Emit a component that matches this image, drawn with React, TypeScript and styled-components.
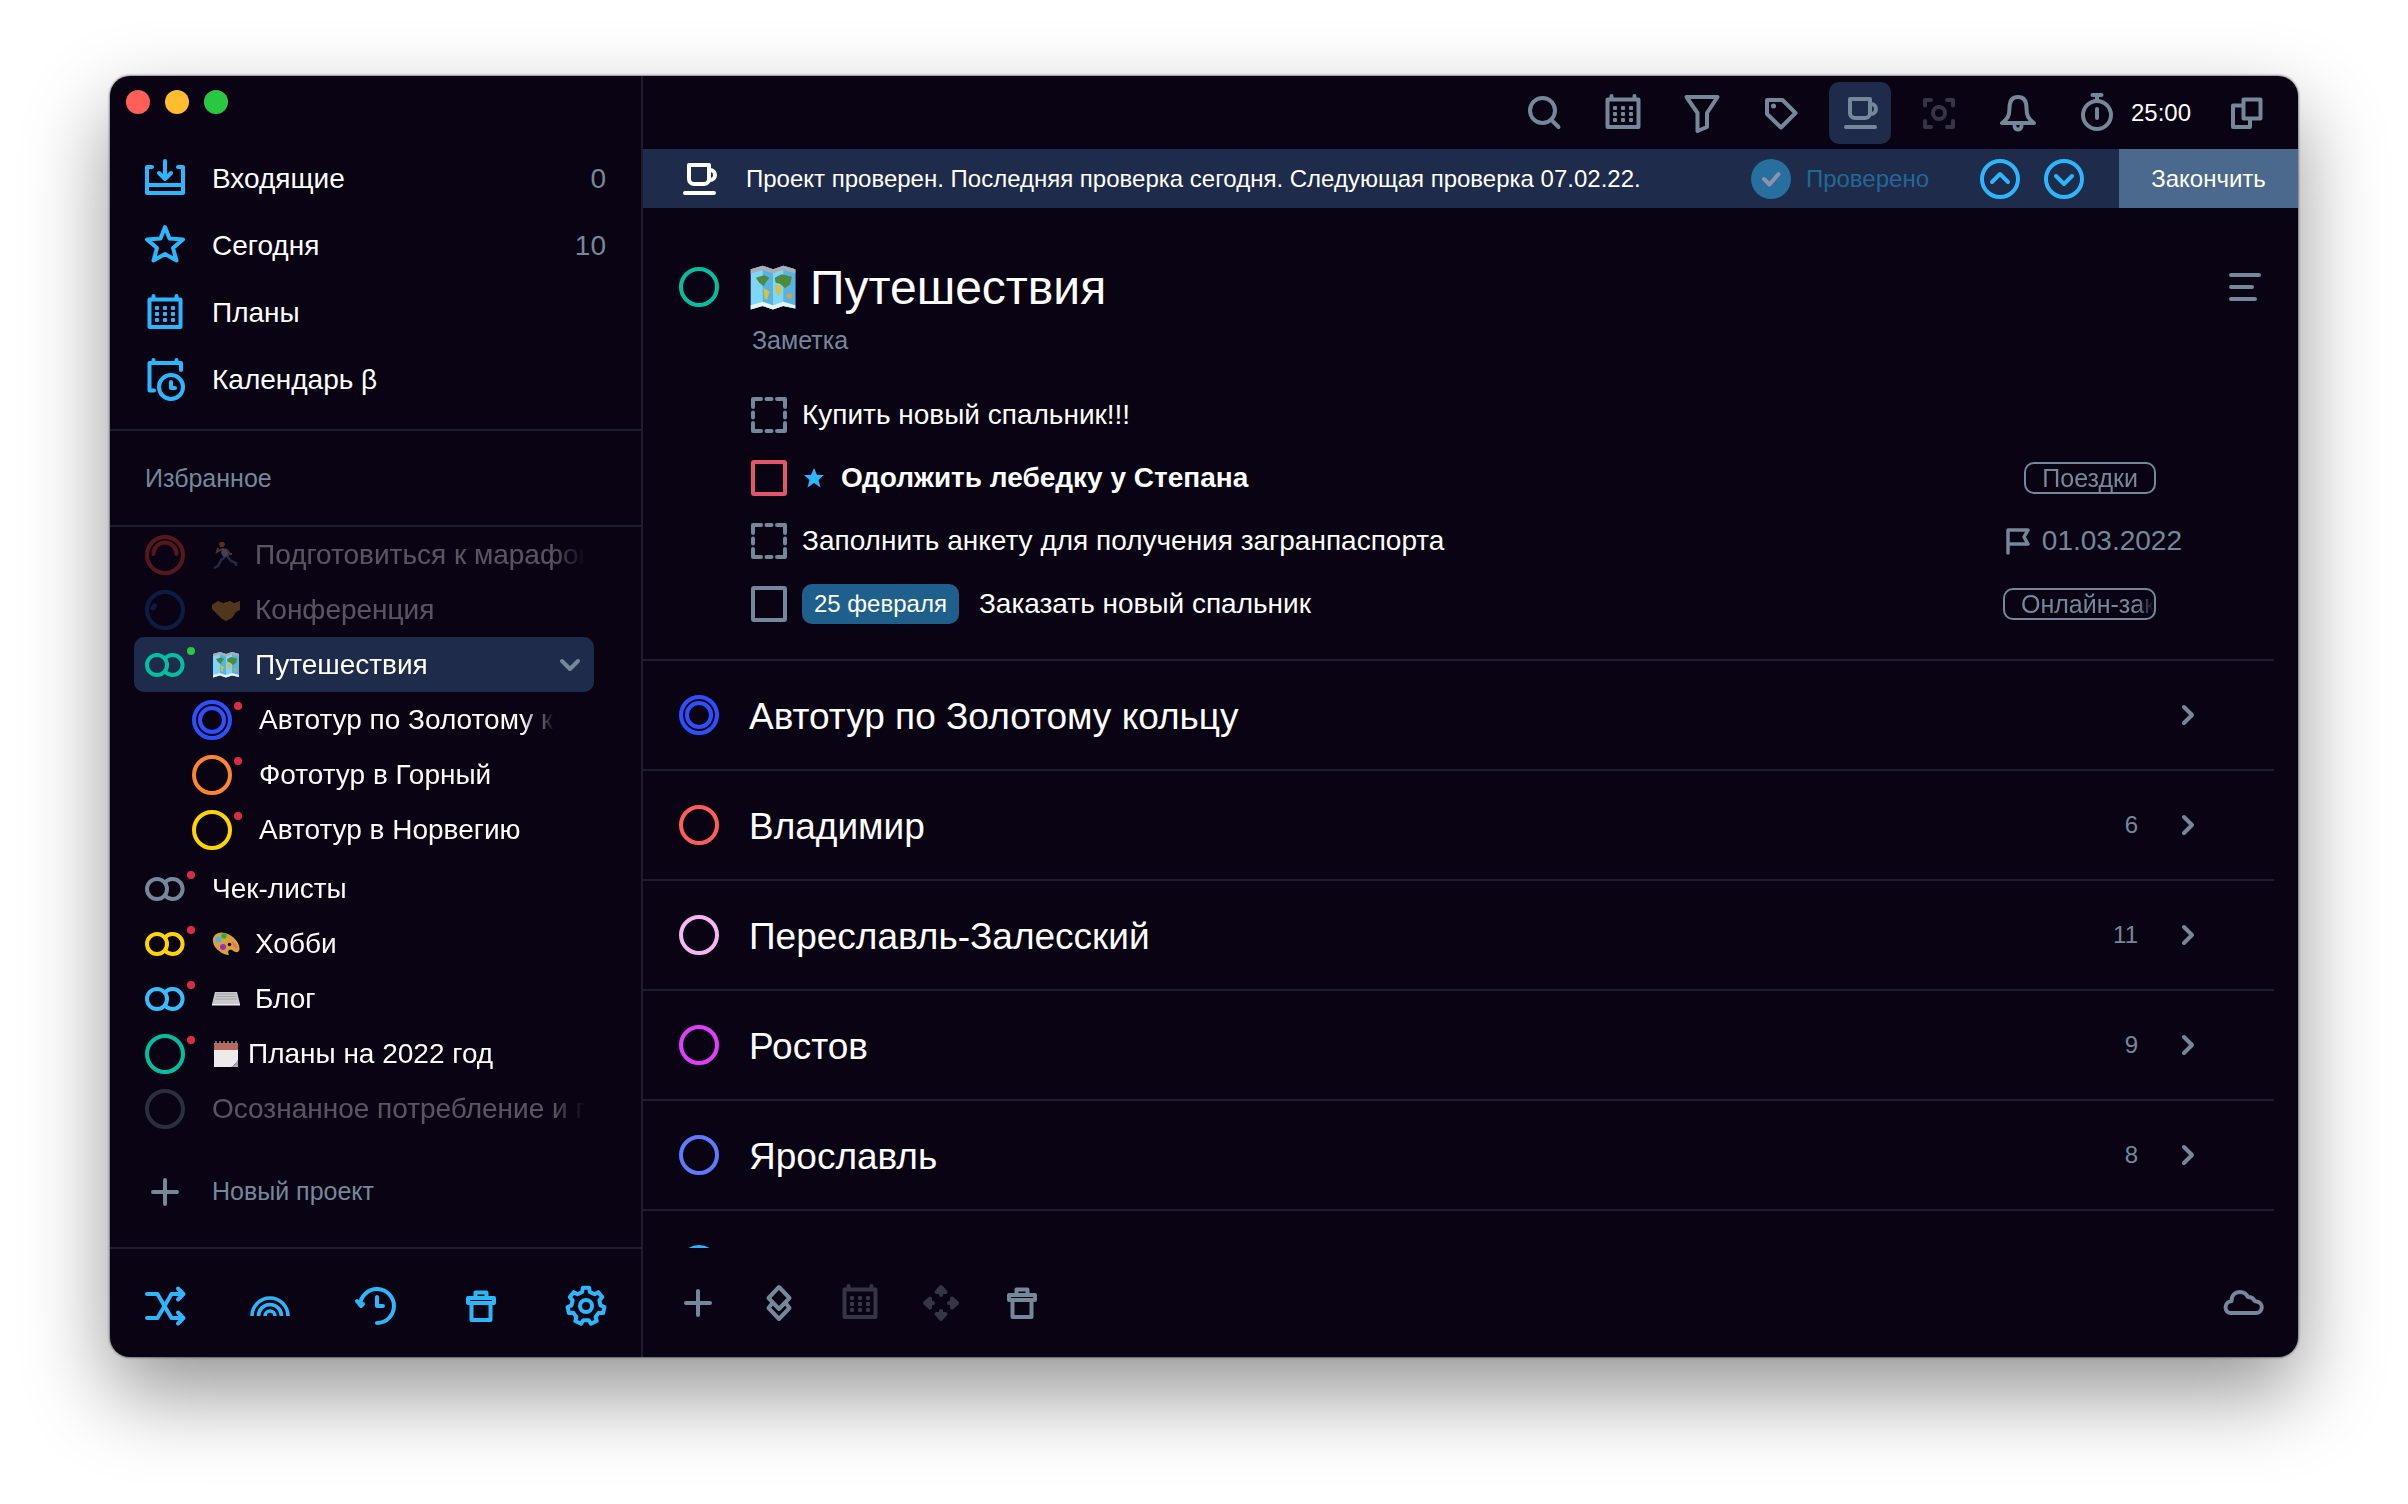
import React from "react";
import styled, { createGlobalStyle, css } from "styled-components";

const c = {
  bg: "#0a0314",
  line: "#1f1c2d",
  panel: "#1e2b4a",
  blue: "#2cb6fc",
  grey: "#74889a",
  faint: "#363546",
  green: "#00bfa0",
  white: "#ffffff",
};

const GlobalStyle = createGlobalStyle`
  *, *::before, *::after { box-sizing: border-box; }
  body {
    margin: 0;
    background: #ffffff;
    font-family: "Liberation Sans", Arial, Helvetica, sans-serif;
    color: ${c.white};
  }
  button {
    font: inherit;
    color: inherit;
    background: none;
    border: 0;
    padding: 0;
    cursor: pointer;
  }
  a { color: inherit; text-decoration: none; }
  h1, h2, p, ul { margin: 0; padding: 0; font-weight: 400; }
  ul { list-style: none; }
`;

/* ---------- icons ---------- */

const Svg = styled.svg<{ $size?: number }>`
  display: block;
  flex: none;
  width: ${(p) => p.$size ?? 44}px;
  height: ${(p) => p.$size ?? 44}px;
  fill: none;
  stroke: currentColor;
  stroke-width: 4;
  stroke-linecap: round;
  stroke-linejoin: round;
`;

type IconProps = { children: React.ReactNode };
const Icon = ({ children }: IconProps) => (
  <Svg viewBox="0 0 44 44" aria-hidden="true">
    {children}
  </Svg>
);

const gearPath = (() => {
  const teeth = 7;
  const points: string[] = [];
  for (let i = 0; i < teeth; i++) {
    const mid = (i / teeth) * Math.PI * 2 - Math.PI / 2;
    const step = (Math.PI * 2) / teeth;
    [
      [-0.3, 14.5],
      [-0.19, 18.5],
      [0.19, 18.5],
      [0.3, 14.5],
    ].forEach(([k, r]) => {
      const a = mid + k * step;
      points.push(`${(22 + r * Math.cos(a)).toFixed(2)} ${(22 + r * Math.sin(a)).toFixed(2)}`);
    });
  }
  return `M${points.join("L")}Z`;
})();

const InboxIcon = () => (
  <Icon>
    <path d="M9 10H4V36H40V10H35M4 28H40M22 4V20M16 16l6 6 6-6" />
  </Icon>
);
const StarIcon = () => (
  <Icon>
    <path d="M22 3L26.5 14.5L40 15.5L30 24L33.5 36.5L22 30L10.5 36.5L14 24L4 15.5L17.5 14.5Z" />
  </Icon>
);
const CalendarIcon = () => (
  <Icon>
    <path d="M6.500 8.500H37.500V36H6.500ZM10.500 5V8M33.500 5V8" />
    <g fill="currentColor" stroke="none">
      {[15, 21, 27].map((y) => [12, 20, 28].map((x) => <rect key={`${x}-${y}`} x={x} y={y} width="4" height="4" rx="1" />))}
    </g>
  </Icon>
);
const AgendaIcon = () => (
  <Icon>
    <path d="M38 12V5H6.500V32.500H11M10.500 2V5M33.500 2V5" />
    <circle cx="28" cy="29" r="12" />
    <path d="M28 24V30H32" />
  </Icon>
);
const ShuffleIcon = () => (
  <Icon>
    <path d="M4 10H14.500L28.500 34H38M4 34H14.500L28.500 10H38M35 4.500L40.500 10L35 15.500M35 28.500L40.500 34L35 39.500" />
  </Icon>
);
const RainbowIcon = () => (
  <Icon>
    <path d="M4 32a18 18 0 0 1 36 0M10.500 32a11.500 11.500 0 0 1 23 0M17 32a5 5 0 0 1 10 0" strokeWidth="3.600" strokeLinecap="butt" />
  </Icon>
);
const HistoryIcon = () => (
  <Icon>
    <path d="M23 39A17 17 0 1 0 6 21M3 17l4 5 2-2M23 13V22H29" />
  </Icon>
);
const TrashIcon = () => (
  <Icon>
    <path d="M9 14H35V19H9ZM16.500 14V8.500H27.500V14M12.500 19V36H31.500V19" />
  </Icon>
);
const GearIcon = () => (
  <Icon>
    <path d={gearPath} />
    <circle cx="22" cy="22" r="6" />
  </Icon>
);
const SearchIcon = () => (
  <Icon>
    <circle cx="20.500" cy="19.500" r="12.500" />
    <path d="M30 29.500L36.500 36" />
  </Icon>
);
const FilterIcon = () => (
  <Icon>
    <path d="M6.500 6H37.500L27 22V36L17.500 40V22Z" />
  </Icon>
);
const TagIcon = () => (
  <Icon>
    <path d="M8 9H23.500L36.500 22L22 36.500L8 23Z" />
    <circle cx="14.500" cy="15" r="2.500" fill="currentColor" stroke="none" />
  </Icon>
);
const CupIcon = () => (
  <Icon>
    <path d="M12 8H32V22a5 5 0 0 1-5 5H17a5 5 0 0 1-5-5ZM32 13h1a5 5 0 0 1 0 10h-1M8 36H37" />
  </Icon>
);
const FocusIcon = () => (
  <Icon>
    <path d="M8 14.500V9H14M30 9H36V14.500M36 30V36H30M14 36H8V30" />
    <circle cx="22" cy="22" r="6" />
  </Icon>
);
const BellIcon = () => (
  <Icon>
    <path d="M22 6c-6.500 0-8.500 5-8.500 11 0 8-2 11-7.500 15H38c-5.500-4-7.500-7-7.500-15 0-6-2-11-8.500-11ZM18.500 35a3.500 3.500 0 0 0 7 0" />
  </Icon>
);
const TimerIcon = () => (
  <Icon>
    <circle cx="22" cy="24" r="14" />
    <path d="M17.500 4H26.500M22 4V10M22 18V27" />
  </Icon>
);
const WindowsIcon = () => (
  <Icon>
    <path d="M18.500 8.500H35.500V27.500H18.500ZM18 14.500H8V36H25V28" />
  </Icon>
);
const PlusIcon = () => (
  <Icon>
    <path d="M22 10V34M10 22H34" />
  </Icon>
);
const LayersIcon = () => (
  <Icon>
    <path d="M22 6L32.500 17L22 28L11.500 17ZM15 22.500L11.500 27L22 38L32.500 27L29 22.500" />
  </Icon>
);
const MoveIcon = () => (
  <Icon>
    {[0, 90, 180, 270].map((a) => (
      <path key={a} d="M22 6L26.500 11H17.500ZM22 11V14" fill="currentColor" transform={`rotate(${a} 22 22)`} />
    ))}
  </Icon>
);
const CloudIcon = () => (
  <Icon>
    <path d="M9.500 32H34.500a5.500 5.500 0 0 0 1-11.500c-1.500 0-2-.5-2.500-1.500-1-2-3-3-6-3-1.500-3-4.500-5-8-5-5 0-8.500 3.500-8.500 9-8 1-7.500 12-1 12Z" />
  </Icon>
);
const MenuIcon = () => (
  <Icon>
    <path d="M8 10H36M8 22H29M8 34H32" />
  </Icon>
);
const FlagIcon = () => (
  <Svg $size={28} viewBox="0 0 28 28" aria-hidden="true">
    <path d="M4 26V3H24L20 10L24 17H4" strokeWidth="3.500" />
  </Svg>
);
const ChevronIcon = ({ down }: { down?: boolean }) => (
  <Svg $size={24} viewBox="0 0 24 24" aria-hidden="true">
    <path d={down ? "M4 8L12 16L20 8" : "M8 4L16 12L8 20"} />
  </Svg>
);
const RoundChevron = ({ down }: { down?: boolean }) => (
  <Svg $size={40} viewBox="0 0 40 40" aria-hidden="true">
    <circle cx="20" cy="20" r="18" />
    <path d={down ? "M12 17L20 25L28 17" : "M12 23L20 15L28 23"} />
  </Svg>
);
const DoneIcon = () => (
  <Svg $size={40} viewBox="0 0 40 40" aria-hidden="true">
    <circle cx="20" cy="20" r="20" fill="#266f9f" stroke="none" />
    <path d="M13 20L18.500 25.500L27.500 15" stroke="#8e92aa" />
  </Svg>
);
const StarMark = () => (
  <Svg $size={24} viewBox="0 0 24 24" aria-hidden="true">
    <path d="M12 2L15 9H22L16.500 14L18.500 21.500L12 17L5.500 21.500L7.500 14L2 9H9Z" fill={c.blue} stroke="none" />
  </Svg>
);

type RingKind = "ring" | "double" | "arc" | "pie" | "group";
const Ring = ({ kind, color }: { kind: RingKind; color: string }) => (
  <Svg $size={40} viewBox="0 0 40 40" style={{ color }} aria-hidden="true">
    {kind === "group" ? (
      <>
        <circle cx="12" cy="20" r="10" />
        <path d="M20 13.500A10 10 0 1 1 20 26.500" />
      </>
    ) : (
      <circle cx="20" cy="20" r="18" />
    )}
    {kind === "double" && <circle cx="20" cy="20" r="12" />}
    {kind === "arc" && <path d="M8.500 19a11.500 11.500 0 0 1 23 0" />}
    {kind === "pie" && <path d="M8 18l1.500-2" strokeWidth="5" />}
  </Svg>
);

/* ---------- emoji drawings ---------- */

type EmojiName = "map" | "run" | "shake" | "palette" | "laptop" | "note";
const emojiArt: Record<EmojiName, React.ReactNode> = {
  map: (
    <>
      <path d="M1 3L8 1L14 3L20 1L27 3V26L20 24.500L14 26.500L8 24.500L1 26.500Z" fill="#7ed6fb" />
      <path d="M8 1L14 3V26.500L8 24.500ZM20 1L27 3V26L20 24.500Z" fill="#57b3e0" />
      <path d="M1 3L8 1L14 3L20 1L27 3V5.500L20 3.500L14 5.500L8 3.500L1 5.500Z" fill="#a9adb4" />
      <path d="M1 24L8 22L14 24L20 22L27 24V26L20 24.500L14 26.500L8 24.500L1 26.500Z" fill="#e8f1f4" />
      <path d="M4 8L9 6.500L12 8L10 10.500L8.500 13L6 11ZM15 8L19 6L25 7.500L24 12L21 14L18 11.500L15.500 11Z" fill="#4f8a3c" />
      <path d="M8.500 14L12 16L10.500 21L9 20ZM15 12L19 13L18.500 17L17 19L15.500 15Z" fill="#d7c23a" />
      <path d="M22 17.500L25 17V20L22.500 20Z" fill="#e0a13a" />
    </>
  ),
  run: (
    <>
      <circle cx="10" cy="3.500" r="2.800" fill="#e09a3a" />
      <path d="M10 7L15 8L17 15L12 17L9 12Z" fill="#b9c0d4" />
      <path d="M10 8L5 11L6 7M15 9L18 13H20" stroke="#e0a050" strokeWidth="2" fill="none" />
      <path d="M13 16L9 19L6 25L2 27M15 15L19 20L24 22V25" stroke="#6477a8" strokeWidth="2.500" fill="none" />
    </>
  ),
  shake: (
    <path d="M0 9L6 5L11 7L18 5L22 7L28 5V14L24 16L20 22L14 25L10 23L4 17L0 13Z" fill="#e8a22e" />
  ),
  palette: (
    <>
      <path d="M1 12C0 5 6 1 13 3C21 5 28 13 27.500 19C27 24 22 22 20 20C17 19 15 21 17 25C14 26 2 20 1 12Z" fill="#d9a13c" />
      <circle cx="6.500" cy="9.500" r="3" fill="#46b4ee" />
      <circle cx="12" cy="6" r="2.700" fill="#2fae35" />
      <circle cx="11" cy="17" r="3" fill="#9a2ec0" />
      <path d="M21 11L26 17L24 19L20 14Z" fill="#f0705a" />
      <circle cx="17.500" cy="14.500" r="1.800" fill="#1a1220" />
    </>
  ),
  laptop: (
    <>
      <path d="M3 7H25L28 19H0Z" fill="#c9c9ce" />
      <path d="M4 9H24M4 11.500H24.500M3 14H25" stroke="#a3a3aa" strokeWidth="1" />
      <path d="M0 19H28V20.500H0Z" fill="#eeeef2" />
    </>
  ),
  note: (
    <>
      <path d="M2 3H26V21L20 27H2Z" fill="#eeeaec" />
      <path d="M2 3H26V10H2Z" fill="#b9685c" />
      <path d="M4 1V4M8 1V4M12 1V4M16 1V4M20 1V4M24 1V4" stroke="#8d8890" strokeWidth="1.500" />
      <path d="M26 19V27H18C23 26 24 23 26 19Z" fill="#a9a6b2" />
    </>
  ),
};
const EmojiSvg = styled.svg<{ $size: number }>`
  display: block;
  flex: none;
  width: ${(p) => p.$size}px;
  height: ${(p) => p.$size}px;
`;
const Emoji = ({ name, size = 28 }: { name: EmojiName; size?: number }) => (
  <EmojiSvg $size={size} viewBox="0 0 28 28" aria-hidden="true">
    {emojiArt[name]}
  </EmojiSvg>
);

/* ---------- window ---------- */

const Page = styled.div`
  display: flex;
  height: 100vh;
  min-height: 900px;
  padding: 76px 110px 147px;
`;
const Window = styled.div`
  flex: 1;
  min-width: 0;
  display: flex;
  overflow: hidden;
  border-radius: 20px;
  background: ${c.bg};
  box-shadow: 0 0 2px 1px rgba(0, 0, 0, 0.4), 0 36px 84px rgba(0, 0, 0, 0.42);
`;

/* ---------- sidebar ---------- */

const Sidebar = styled.aside`
  flex: none;
  width: 533px;
  display: flex;
  flex-direction: column;
  border-right: 2px solid ${c.line};
`;
const TitleBar = styled.div`
  display: flex;
  gap: 15px;
  height: 69px;
  padding: 14px 16px;
`;
const Light = styled.button<{ $color: string }>`
  width: 24px;
  height: 24px;
  border-radius: 50%;
  background: ${(p) => p.$color};
`;
const Nav = styled.nav`
  padding-bottom: 16px;
  border-bottom: 2px solid ${c.line};
`;
const NavLink = styled.a`
  display: flex;
  align-items: center;
  gap: 25px;
  height: 67px;
  padding: 0 35px 0 33px;
  font-size: 28px;
  svg { color: ${c.blue}; }
`;
const NavName = styled.span`
  flex: 1;
`;
const NavCount = styled.span`
  color: ${c.grey};
`;
const Favorites = styled.h2`
  display: flex;
  align-items: center;
  height: 96px;
  padding: 0 35px;
  border-bottom: 2px solid ${c.line};
  font-size: 25px;
  color: ${c.grey};
`;
const ProjectItem = styled.li<{ $gap?: boolean }>`
  margin: ${(p) => (p.$gap ? 4 : 0)}px 47px 0 24px;
`;
const ProjectLink = styled.a<{ $sub?: boolean; $active?: boolean; $muted?: boolean }>`
  display: flex;
  align-items: center;
  height: 55px;
  padding: 0 ${(p) => (p.$sub ? 40 : 8)}px 0 ${(p) => (p.$sub ? 58 : 11)}px;
  border-radius: 10px;
  font-size: 28px;
  background: ${(p) => (p.$active ? c.panel : "transparent")};
  color: ${c.white};
  > * { opacity: ${(p) => (p.$muted ? 0.32 : 1)}; }
`;
const RingBox = styled.span<{ $dot?: string }>`
  position: relative;
  margin-right: 27px;
  ${(p) =>
    p.$dot &&
    css`
      &::after {
        content: "";
        position: absolute;
        top: 2px;
        right: -10px;
        width: 8px;
        height: 8px;
        border-radius: 50%;
        background: ${p.$dot};
      }
    `}
`;
const ProjectName = styled.span<{ $indent: number }>`
  flex: 1;
  min-width: 0;
  margin-left: ${(p) => p.$indent}px;
  line-height: 40px;
  white-space: nowrap;
  overflow: hidden;
  mask-image: linear-gradient(to right, #000 calc(100% - 32px), transparent);
`;
const Expander = styled.span`
  display: flex;
  justify-content: center;
  width: 32px;
  color: ${c.grey};
`;
const NewProject = styled.button`
  flex: 1;
  display: flex;
  align-items: center;
  gap: 25px;
  padding: 0 33px;
  font-size: 25px;
  color: ${c.grey};
`;
const SideTools = styled.div`
  display: flex;
  align-items: center;
  justify-content: space-between;
  height: 110px;
  padding: 6px 33px 0;
  border-top: 2px solid ${c.line};
  color: ${c.blue};
`;

/* ---------- main ---------- */

const Main = styled.main`
  flex: 1;
  min-width: 0;
  display: flex;
  flex-direction: column;
`;
const Toolbar = styled.div`
  flex: none;
  display: flex;
  align-items: center;
  justify-content: flex-end;
  gap: 17px;
  height: 73px;
  padding-right: 20px;
  color: ${c.grey};
`;
const ToolButton = styled.button<{ $active?: boolean }>`
  display: flex;
  align-items: center;
  justify-content: center;
  width: 62px;
  height: 62px;
  border-radius: 10px;
  background: ${(p) => (p.$active ? c.panel : "transparent")};
  &:disabled { color: ${c.faint}; }
`;
const TimerButton = styled.button`
  display: flex;
  align-items: center;
  gap: 12px;
  padding: 0 8px 0 9px;
  font-size: 24px;
  span { color: ${c.white}; }
`;
const Banner = styled.div`
  flex: none;
  display: flex;
  align-items: center;
  height: 59px;
  padding-left: 34px;
  background: ${c.panel};
  font-size: 24px;
`;
const BannerText = styled.p`
  flex: 1;
  margin-left: 25px;
  white-space: nowrap;
`;
const Checked = styled.span`
  display: flex;
  align-items: center;
  gap: 15px;
  color: #226896;
`;
const Steps = styled.div`
  display: flex;
  gap: 24px;
  margin: 0 35px 0 51px;
  color: ${c.blue};
`;
const Finish = styled.button`
  align-self: stretch;
  width: 179px;
  background: #4a698c;
`;
const Content = styled.div`
  flex: 1;
  min-height: 0;
  overflow: hidden;
`;
const Head = styled.header`
  display: flex;
  align-items: center;
  height: 56px;
  margin-top: 51px;
  padding: 0 31px 0 36px;
`;
const HeadTitle = styled.h1`
  flex: 1;
  display: flex;
  align-items: center;
  gap: 13px;
  margin-left: 30px;
  padding-top: 2px;
  font-size: 48px;
  line-height: 56px;
`;
const PlainButton = styled.button`
  color: ${c.grey};
  &:disabled { color: ${c.faint}; }
`;
const Note = styled.p`
  margin: 9px 0 27px;
  padding-left: 109px;
  font-size: 25px;
  line-height: 32px;
  color: ${c.grey};
`;
const Tasks = styled.ul`
  padding: 0 116px 24px 108px;
`;
const Task = styled.li`
  display: flex;
  align-items: center;
  height: 63px;
  font-size: 28px;
`;
const TaskLabel = styled.label<{ $bold?: boolean }>`
  flex: 1;
  display: flex;
  align-items: center;
  gap: 15px;
  font-weight: ${(p) => (p.$bold ? 700 : 400)};
`;
const CheckCell = styled.span`
  display: grid;
  > * { grid-area: 1 / 1; }
`;
const CheckInput = styled.input`
  appearance: none;
  width: 36px;
  height: 36px;
  margin: 0;
`;
const DateBadge = styled.span`
  height: 40px;
  margin-right: 5px;
  padding: 0 12px;
  border-radius: 10px;
  background: #1f5f8b;
  font-size: 24px;
  line-height: 40px;
`;
const Tag = styled.span`
  max-width: 153px;
  height: 32px;
  margin-right: 26px;
  padding-left: 16px;
  border: 2px solid ${c.grey};
  border-radius: 10px;
  overflow: hidden;
  color: ${c.grey};
  font-size: 25px;
  line-height: 28px;
`;
const TagText = styled.span`
  display: block;
  padding-right: 16px;
  white-space: nowrap;
  overflow: hidden;
  mask-image: linear-gradient(to right, #000 calc(100% - 16px), transparent);
`;
const Deadline = styled.span`
  display: flex;
  align-items: center;
  gap: 10px;
  color: ${c.grey};
`;
const Sections = styled.ul`
  margin-right: 24px;
`;
const Section = styled.li`
  display: flex;
  align-items: center;
  height: 110px;
  padding: 0 74px 0 36px;
  border-top: 2px solid ${c.line};
`;
const SectionName = styled.h2`
  flex: 1;
  margin-left: 30px;
  padding-top: 4px;
  font-size: 37px;
  line-height: 44px;
`;
const SectionCount = styled.span`
  margin-right: 38px;
  font-size: 24px;
  color: ${c.grey};
`;
const Footer = styled.footer`
  flex: none;
  display: flex;
  align-items: center;
  gap: 37px;
  height: 109px;
  padding: 0 33px;
`;
const Spacer = styled.span`
  flex: 1;
`;

/* ---------- data ---------- */

const nav = [
  { name: "Входящие", icon: <InboxIcon />, count: "0" },
  { name: "Сегодня", icon: <StarIcon />, count: "10" },
  { name: "Планы", icon: <CalendarIcon /> },
  { name: "Календарь β", icon: <AgendaIcon /> },
];

type Project = {
  name: string;
  kind: RingKind;
  color: string;
  dot?: string;
  emoji?: EmojiName;
  tight?: boolean;
  sub?: boolean;
  active?: boolean;
  muted?: boolean;
  gap?: boolean;
};
const red = "#dd2a45";
const projects: Project[] = [
  { name: "Подготовиться к марафону", kind: "arc", color: "#f2402f", emoji: "run", muted: true },
  { name: "Конференция", kind: "pie", color: "#1556a0", emoji: "shake", muted: true },
  { name: "Путешествия", kind: "group", color: c.green, dot: "#28c940", emoji: "map", active: true },
  { name: "Автотур по Золотому кольцу", kind: "double", color: "#2c50ff", dot: red, sub: true },
  { name: "Фототур в Горный", kind: "ring", color: "#ff8433", dot: red, sub: true },
  { name: "Автотур в Норвегию", kind: "ring", color: "#ffd400", dot: red, sub: true },
  { name: "Чек-листы", kind: "group", color: c.grey, dot: red, gap: true },
  { name: "Хобби", kind: "group", color: "#ffd400", dot: red, emoji: "palette" },
  { name: "Блог", kind: "group", color: "#38bdff", dot: red, emoji: "laptop" },
  { name: "Планы на 2022 год", kind: "ring", color: c.green, dot: red, emoji: "note", tight: true },
  { name: "Осознанное потребление и переработка", kind: "ring", color: c.grey, muted: true },
];

type TaskData = {
  name: string;
  dashed?: boolean;
  color?: string;
  star?: boolean;
  date?: string;
  tag?: string;
  deadline?: string;
};
const tasks: TaskData[] = [
  { name: "Купить новый спальник!!!", dashed: true },
  { name: "Одолжить лебедку у Степана", color: "#e2566b", star: true, tag: "Поездки" },
  { name: "Заполнить анкету для получения загранпаспорта", dashed: true, deadline: "01.03.2022" },
  { name: "Заказать новый спальник", date: "25 февраля", tag: "Онлайн-заказы" },
];

const sections: { name: string; kind: RingKind; color: string; count?: string }[] = [
  { name: "Автотур по Золотому кольцу", kind: "double", color: "#2c50ff" },
  { name: "Владимир", kind: "ring", color: "#ff5d59", count: "6" },
  { name: "Переславль-Залесский", kind: "ring", color: "#f5b6f2", count: "11" },
  { name: "Ростов", kind: "ring", color: "#e23dff", count: "9" },
  { name: "Ярославль", kind: "ring", color: "#5f7aff", count: "8" },
  { name: "", kind: "ring", color: c.blue },
];

const Checkbox = ({ id, dashed, color = c.grey }: { id: string; dashed?: boolean; color?: string }) => (
  <CheckCell>
    <Svg $size={36} viewBox="0 0 36 36" style={{ color }} aria-hidden="true">
      {dashed ? (
        <path d="M2 10V2H10M15.500 2H20.500M26 2H34V10M34 15.500V20.500M34 26V34H26M20.500 34H15.500M10 34H2V26M2 20.500V15.500" />
      ) : (
        <rect x="2" y="2" width="32" height="32" rx="1" />
      )}
    </Svg>
    <CheckInput type="checkbox" id={id} />
  </CheckCell>
);

const App = () => (
  <>
    <GlobalStyle />
    <Page>
      <Window>
        <Sidebar>
          <TitleBar>
            <Light $color="#ff5f57" aria-label="Закрыть" />
            <Light $color="#febc2e" aria-label="Свернуть" />
            <Light $color="#28c840" aria-label="Развернуть" />
          </TitleBar>
          <Nav>
            {nav.map((n) => (
              <NavLink key={n.name} href="#">
                {n.icon}
                <NavName>{n.name}</NavName>
                {n.count && <NavCount>{n.count}</NavCount>}
              </NavLink>
            ))}
          </Nav>
          <Favorites>Избранное</Favorites>
          <ul>
            {projects.map((p) => (
              <ProjectItem key={p.name} $gap={p.gap}>
                <ProjectLink href="#" $sub={p.sub} $active={p.active} $muted={p.muted}>
                  <RingBox $dot={p.dot}>
                    <Ring kind={p.kind} color={p.color} />
                  </RingBox>
                  {p.emoji && <Emoji name={p.emoji} />}
                  <ProjectName $indent={p.emoji ? (p.tight ? 8 : 15) : 0}>{p.name}</ProjectName>
                  {p.active && (
                    <Expander>
                      <ChevronIcon down />
                    </Expander>
                  )}
                </ProjectLink>
              </ProjectItem>
            ))}
          </ul>
          <NewProject>
            <PlusIcon />
            Новый проект
          </NewProject>
          <SideTools>
            <button aria-label="Перемешать"><ShuffleIcon /></button>
            <button aria-label="Темы"><RainbowIcon /></button>
            <button aria-label="История"><HistoryIcon /></button>
            <button aria-label="Корзина"><TrashIcon /></button>
            <button aria-label="Настройки"><GearIcon /></button>
          </SideTools>
        </Sidebar>

        <Main>
          <Toolbar>
            <ToolButton aria-label="Поиск"><SearchIcon /></ToolButton>
            <ToolButton aria-label="Календарь"><CalendarIcon /></ToolButton>
            <ToolButton aria-label="Фильтр"><FilterIcon /></ToolButton>
            <ToolButton aria-label="Метки"><TagIcon /></ToolButton>
            <ToolButton aria-label="Обзор" $active><CupIcon /></ToolButton>
            <ToolButton aria-label="Фокус" disabled><FocusIcon /></ToolButton>
            <ToolButton aria-label="Уведомления"><BellIcon /></ToolButton>
            <TimerButton>
              <TimerIcon />
              <span>25:00</span>
            </TimerButton>
            <ToolButton aria-label="Новое окно"><WindowsIcon /></ToolButton>
          </Toolbar>

          <Banner>
            <CupIcon />
            <BannerText>Проект проверен. Последняя проверка сегодня. Следующая проверка 07.02.22.</BannerText>
            <Checked>
              <DoneIcon />
              Проверено
            </Checked>
            <Steps>
              <button aria-label="Предыдущий"><RoundChevron /></button>
              <button aria-label="Следующий"><RoundChevron down /></button>
            </Steps>
            <Finish>Закончить</Finish>
          </Banner>

          <Content>
            <Head>
              <button aria-label="Завершить проект">
                <Ring kind="ring" color={c.green} />
              </button>
              <HeadTitle>
                <Emoji name="map" size={48} />
                Путешествия
              </HeadTitle>
              <PlainButton aria-label="Меню проекта"><MenuIcon /></PlainButton>
            </Head>
            <Note>Заметка</Note>

            <Tasks>
              {tasks.map((t, i) => (
                <Task key={t.name}>
                  <TaskLabel htmlFor={`task-${i}`} $bold={t.star}>
                    <Checkbox id={`task-${i}`} dashed={t.dashed} color={t.color} />
                    {t.star && <StarMark />}
                    {t.date && <DateBadge>{t.date}</DateBadge>}
                    {t.name}
                  </TaskLabel>
                  {t.tag && (
                    <Tag>
                      <TagText>{t.tag}</TagText>
                    </Tag>
                  )}
                  {t.deadline && (
                    <Deadline>
                      <FlagIcon />
                      {t.deadline}
                    </Deadline>
                  )}
                </Task>
              ))}
            </Tasks>

            <Sections>
              {sections.map((s) => (
                <Section key={s.color}>
                  <Ring kind={s.kind} color={s.color} />
                  <SectionName>{s.name}</SectionName>
                  {s.count && <SectionCount>{s.count}</SectionCount>}
                  <PlainButton aria-label="Открыть раздел"><ChevronIcon /></PlainButton>
                </Section>
              ))}
            </Sections>
          </Content>

          <Footer>
            <PlainButton aria-label="Добавить"><PlusIcon /></PlainButton>
            <PlainButton aria-label="Добавить группу"><LayersIcon /></PlainButton>
            <PlainButton aria-label="Дата" disabled><CalendarIcon /></PlainButton>
            <PlainButton aria-label="Переместить" disabled><MoveIcon /></PlainButton>
            <PlainButton aria-label="Удалить"><TrashIcon /></PlainButton>
            <Spacer />
            <PlainButton aria-label="Синхронизация"><CloudIcon /></PlainButton>
          </Footer>
        </Main>
      </Window>
    </Page>
  </>
);

export default App;
